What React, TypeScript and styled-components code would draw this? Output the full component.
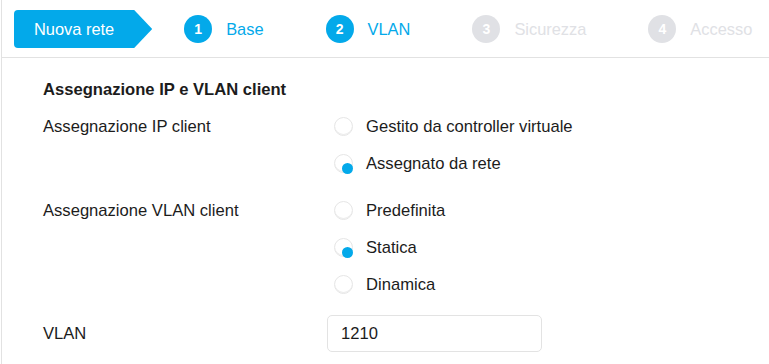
import React from "react";
import styled, { createGlobalStyle } from "styled-components";

const Global = createGlobalStyle`
  html, body { margin: 0; padding: 0; background: #fff; }
  body { font-family: "Liberation Sans", Arial, sans-serif; color: #1c1c1c; }
  * { box-sizing: border-box; }
`;

const BLUE = "#03a9ea";
const GRAY = "#e0e1e5";

const Frame = styled.div`
  margin-left: 1px;
  border-left: 1px solid #e2e2e2;
  width: 768px;
  height: 364px;
  overflow: hidden;
`;

const Header = styled.div`
  height: 58px;
  border-bottom: 1px solid #e2e2e2;
  display: flex;
  align-items: center;
  padding-left: 12px;
  padding-top: 1px;
`;

const Title = styled.div`
  flex: none;
  white-space: nowrap;
  height: 38px;
  display: flex;
  align-items: center;
  padding: 0 38px 0 20px;
  background: ${BLUE};
  color: #fff;
  font-size: 16.4px;
  border-radius: 4px;
  clip-path: polygon(0 0, calc(100% - 18px) 0, 100% 50%, calc(100% - 18px) 100%, 0 100%);
  margin-right: 32px;
`;

const Step = styled.div<{ $active: boolean }>`
  flex: none;
  white-space: nowrap;
  display: flex;
  align-items: center;
  gap: 14px;
  margin-right: 62px;
  color: ${(p) => (p.$active ? BLUE : GRAY)};
  font-size: 16.4px;
`;

const Dot = styled.span<{ $active: boolean }>`
  width: 28px;
  height: 28px;
  border-radius: 50%;
  background: ${(p) => (p.$active ? BLUE : GRAY)};
  color: #fff;
  font-weight: bold;
  font-size: 14px;
  display: flex;
  align-items: center;
  justify-content: center;
`;

const Content = styled.div`
  padding: 23px 0 0 41px;
`;

const SectionTitle = styled.div`
  font-size: 16.6px;
  font-weight: bold;
  line-height: 18px;
  margin-bottom: 9px;
`;

const FormRow = styled.div<{ $gap: number }>`
  display: grid;
  grid-template-columns: 284px 1fr;
  align-items: start;
  margin-bottom: ${(p) => p.$gap}px;
`;

const Label = styled.div<{ $h: number }>`
  font-size: 16.6px;
  line-height: ${(p) => p.$h}px;
`;

const Options = styled.div`
  display: flex;
  flex-direction: column;
`;

const Option = styled.label`
  height: 37px;
  display: flex;
  align-items: center;
  gap: 13px;
  padding-left: 7px;
  font-size: 16.6px;
`;

const Radio = styled.span<{ $checked: boolean }>`
  position: relative;
  width: 19px;
  height: 19px;
  border-radius: 50%;
  border: 1.5px solid #e6e6e6;
  box-shadow: inset 0 -1px 0 #ececec;
  flex: none;
  &::after {
    content: "";
    display: ${(p) => (p.$checked ? "block" : "none")};
    position: absolute;
    left: 7px;
    top: 8px;
    width: 11px;
    height: 11px;
    border-radius: 50%;
    background: ${BLUE};
  }
`;

const Input = styled.input`
  width: 215px;
  height: 37px;
  border: 1px solid #e3e3e3;
  border-radius: 5px;
  padding: 0 13px;
  font-family: "Liberation Sans", Arial, sans-serif;
  font-size: 16.6px;
  color: #1c1c1c;
  outline: none;
`;

const steps = [
  { n: 1, label: "Base", active: true },
  { n: 2, label: "VLAN", active: true },
  { n: 3, label: "Sicurezza", active: false },
  { n: 4, label: "Accesso", active: false },
];

export default function App() {
  return (
    <>
      <Global />
      <Frame>
        <Header>
          <Title>Nuova rete</Title>
          {steps.map((s) => (
            <Step key={s.n} $active={s.active}>
              <Dot $active={s.active}>{s.n}</Dot>
              {s.label}
            </Step>
          ))}
        </Header>
        <Content>
          <SectionTitle>Assegnazione IP e VLAN client</SectionTitle>
          <FormRow $gap={10}>
            <Label $h={37}>Assegnazione IP client</Label>
            <Options>
              <Option><Radio $checked={false} />Gestito da controller virtuale</Option>
              <Option><Radio $checked={true} />Assegnato da rete</Option>
            </Options>
          </FormRow>
          <FormRow $gap={12}>
            <Label $h={37}>Assegnazione VLAN client</Label>
            <Options>
              <Option><Radio $checked={false} />Predefinita</Option>
              <Option><Radio $checked={true} />Statica</Option>
              <Option><Radio $checked={false} />Dinamica</Option>
            </Options>
          </FormRow>
          <FormRow $gap={0}>
            <Label $h={37}>VLAN</Label>
            <Input defaultValue="1210" />
          </FormRow>
        </Content>
      </Frame>
    </>
  );
}
